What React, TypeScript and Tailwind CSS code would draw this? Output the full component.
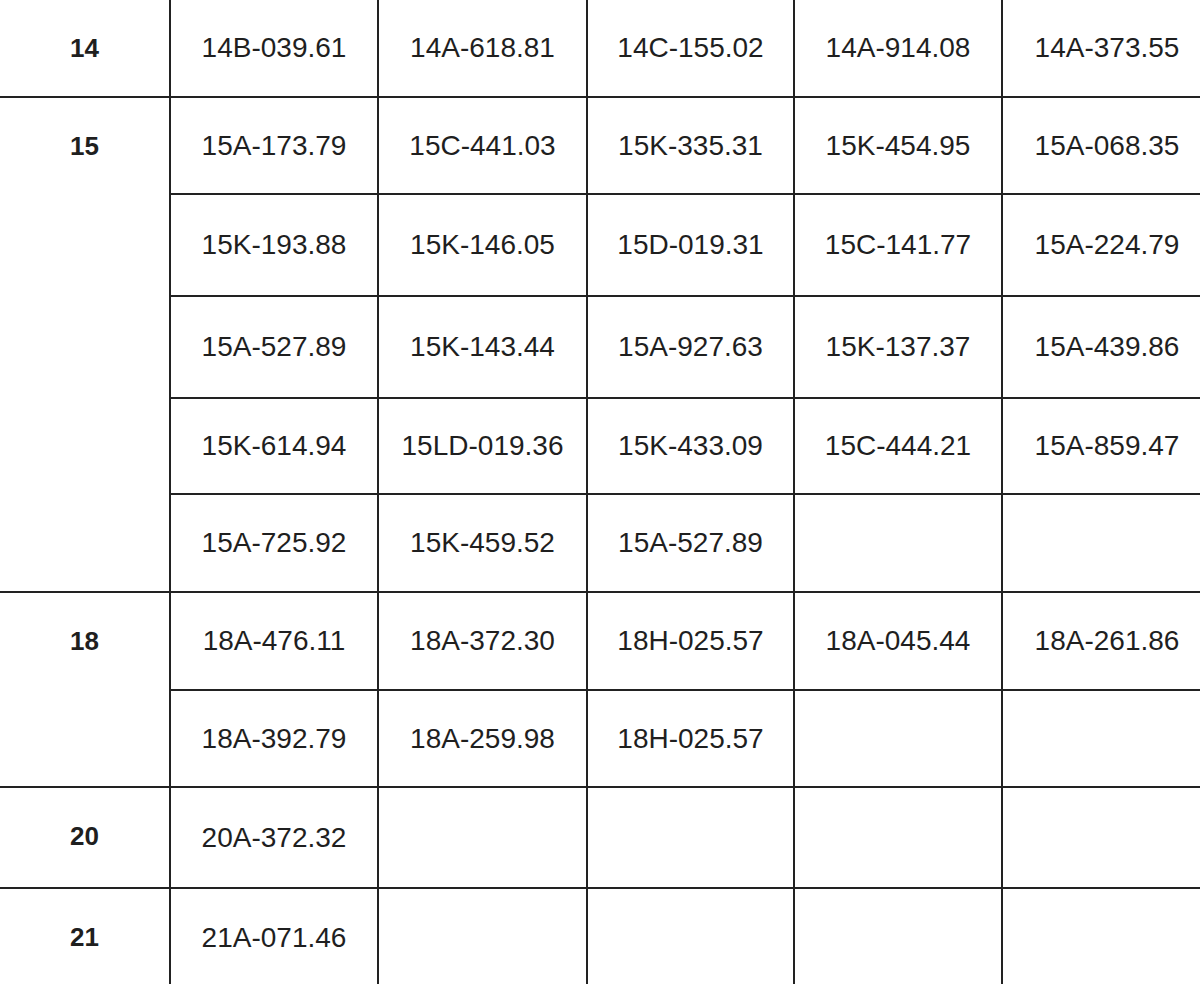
import React from 'react';

type Row = {
  h: string;
  label?: string;
  span?: number;
  cells: string[];
};

const rows: Row[] = [
  { h: 'h-[98px]', label: '14', span: 1, cells: ['14B-039.61', '14A-618.81', '14C-155.02', '14A-914.08', '14A-373.55'] },
  { h: 'h-[97px]', label: '15', span: 5, cells: ['15A-173.79', '15C-441.03', '15K-335.31', '15K-454.95', '15A-068.35'] },
  { h: 'h-[102px]', cells: ['15K-193.88', '15K-146.05', '15D-019.31', '15C-141.77', '15A-224.79'] },
  { h: 'h-[102px]', cells: ['15A-527.89', '15K-143.44', '15A-927.63', '15K-137.37', '15A-439.86'] },
  { h: 'h-[96px]', cells: ['15K-614.94', '15LD-019.36', '15K-433.09', '15C-444.21', '15A-859.47'] },
  { h: 'h-[98px]', cells: ['15A-725.92', '15K-459.52', '15A-527.89', '', ''] },
  { h: 'h-[98px]', label: '18', span: 2, cells: ['18A-476.11', '18A-372.30', '18H-025.57', '18A-045.44', '18A-261.86'] },
  { h: 'h-[97px]', cells: ['18A-392.79', '18A-259.98', '18H-025.57', '', ''] },
  { h: 'h-[101px]', label: '20', span: 1, cells: ['20A-372.32', '', '', '', ''] },
  { h: 'h-[100px]', label: '21', span: 1, cells: ['21A-071.46', '', '', '', ''] },
];

export default function App() {
  return (
    <div className="w-[1200px] h-[984px] overflow-hidden bg-white">
      <table
        className="-mt-[2px] w-[1212px] table-fixed border-collapse text-[#1f1f1f]"
        style={{ fontFamily: '"Liberation Sans", Arial, sans-serif' }}
      >
        <colgroup>
          <col className="w-[170px]" />
          <col className="w-[208px]" />
          <col className="w-[209px]" />
          <col className="w-[207px]" />
          <col className="w-[208px]" />
          <col className="w-[210px]" />
        </colgroup>
        <tbody>
          {rows.map((row, i) => (
            <tr key={i} className={row.h}>
              {row.label && (
                <td
                  rowSpan={row.span}
                  className="border-2 border-l-0 border-[#222] align-top text-center text-[26px] font-bold"
                >
                  <div className="flex h-[96px] items-center justify-center">{row.label}</div>
                </td>
              )}
              {row.cells.map((c, j) => (
                <td key={j} className="border-2 border-[#222] p-0 text-center align-middle text-[28px]">
                  {c}
                </td>
              ))}
            </tr>
          ))}
        </tbody>
      </table>
    </div>
  );
}
